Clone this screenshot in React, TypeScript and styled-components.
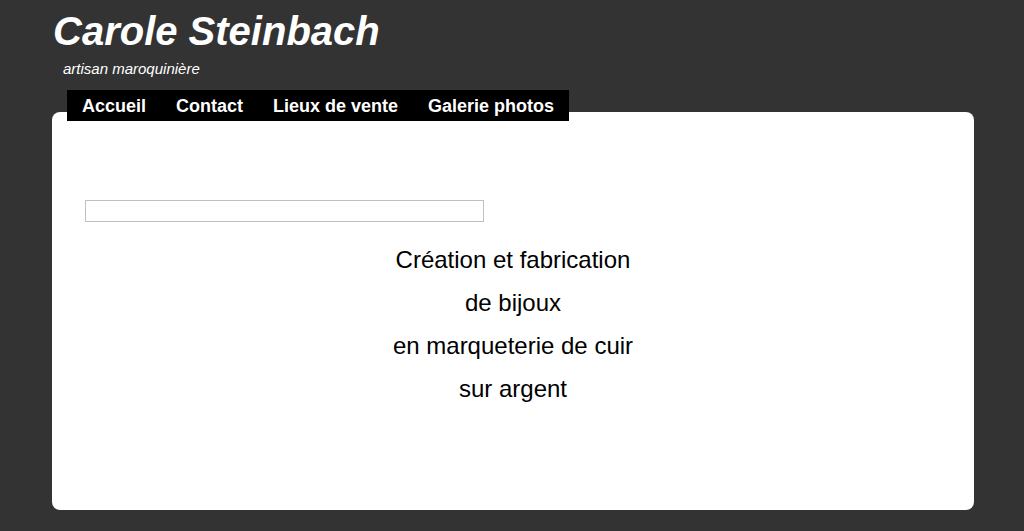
import styled, { createGlobalStyle } from "styled-components";

const GlobalStyle = createGlobalStyle`
  html, body {
    margin: 0;
    padding: 0;
    background-color: #333333;
    font-family: "Liberation Sans", Arial, sans-serif;
  }
`;

const Page = styled.div`
  padding: 7px 50px 21px 52px;
`;

const Header = styled.header`
  display: flex;
  flex-direction: column;
`;

const Title = styled.h1`
  margin: 0;
  padding-left: 1px;
  color: #ffffff;
  font-size: 40px;
  font-style: italic;
  font-weight: 700;
  line-height: 48px;
`;

const Subtitle = styled.div`
  margin: 5px 0 0 11px;
  color: #ffffff;
  font-size: 15px;
  font-style: italic;
  line-height: 18px;
`;

const Nav = styled.nav`
  position: relative;
  z-index: 1;
  display: flex;
  align-self: flex-start;
  margin: 12px 0 -9px 15px;
  background-color: #000000;
`;

const NavLink = styled.a`
  padding: 1px 15px 0;
  color: #ffffff;
  font-size: 18px;
  font-weight: 700;
  line-height: 30px;
  text-decoration: none;
  cursor: pointer;
`;

const Card = styled.main`
  display: flex;
  flex-direction: column;
  height: 398px;
  padding: 88px 33px 0;
  box-sizing: border-box;
  background-color: #ffffff;
  border-radius: 8px;
`;

const SearchBox = styled.input`
  width: 399px;
  height: 22px;
  box-sizing: border-box;
  border: 1px solid #c0c0c0;
  padding: 0 4px;
  outline: none;
`;

const Intro = styled.div`
  margin-top: 16px;
  text-align: center;
  color: #000000;
  font-size: 24px;
  line-height: 43px;
`;

const lines = [
  "Création et fabrication",
  "de bijoux",
  "en marqueterie de cuir",
  "sur argent",
];

const App = () => {
  return (
    <>
      <GlobalStyle />
      <Page>
        <Header>
          <Title>Carole Steinbach</Title>
          <Subtitle>artisan maroquinière</Subtitle>
          <Nav>
            <NavLink>Accueil</NavLink>
            <NavLink>Contact</NavLink>
            <NavLink>Lieux de vente</NavLink>
            <NavLink>Galerie photos</NavLink>
          </Nav>
        </Header>
        <Card>
          <SearchBox type="text" />
          <Intro>
            {lines.map((line) => (
              <div key={line}>{line}</div>
            ))}
          </Intro>
        </Card>
      </Page>
    </>
  );
};

export default App;
